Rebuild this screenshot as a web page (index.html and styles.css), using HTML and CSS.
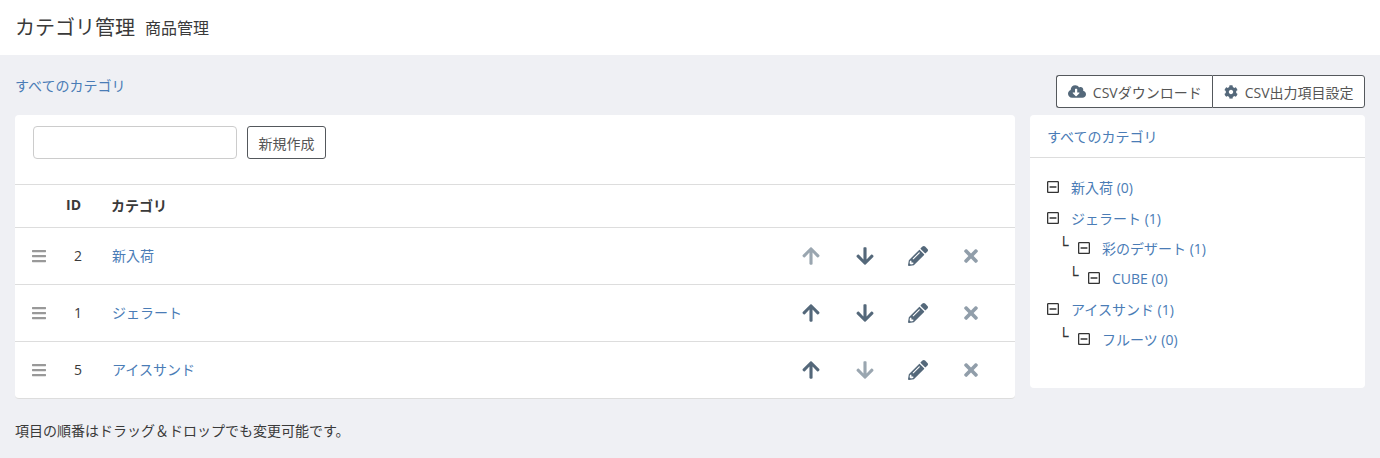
FILE: index.html
```html
<!DOCTYPE html>
<html lang="ja">
<head>
    <meta charset="UTF-8">
    <meta name="viewport" content="width=device-width, initial-scale=1.0">
    <title>カテゴリ管理</title>
    <link rel="stylesheet" href="styles.css">
</head>
<body>
    <svg class="sprite" xmlns="http://www.w3.org/2000/svg">
        <symbol id="i-up" viewBox="0 0 448 512"><path d="M34.9 289.5l-22.2-22.2c-9.4-9.4-9.4-24.6 0-33.9L207 39c9.4-9.4 24.6-9.4 33.9 0l194.3 194.3c9.4 9.4 9.4 24.6 0 33.9L413 289.4c-9.5 9.5-25 9.3-34.3-.4L264 168.6V456c0 13.3-10.7 24-24 24h-32c-13.3 0-24-10.7-24-24V168.6L69.2 289.1c-9.3 9.8-24.8 10-34.3.4z"/></symbol>
        <symbol id="i-down" viewBox="0 0 448 512"><path d="M413.1 222.5l22.2 22.2c9.4 9.4 9.4 24.6 0 33.9L241 473c-9.4 9.4-24.6 9.4-33.9 0L12.7 278.6c-9.4-9.4-9.4-24.6 0-33.9l22.2-22.2c9.5-9.5 25-9.3 34.3.4L184 343.4V56c0-13.3 10.7-24 24-24h32c13.3 0 24 10.7 24 24v287.4l114.8-120.5c9.3-9.8 24.8-10 34.3-.4z"/></symbol>
        <symbol id="i-pencil" viewBox="0 0 512 512"><path d="M497.9 142.1l-46.1 46.1c-4.7 4.7-12.3 4.7-17 0l-111-111c-4.7-4.7-4.7-12.3 0-17l46.1-46.1c18.7-18.7 49.1-18.7 67.9 0l60.1 60.1c18.8 18.7 18.8 49.1 0 67.9zM284.2 99.8L21.6 362.4.4 483.9c-2.9 16.4 11.4 30.6 27.8 27.8l121.5-21.3 262.6-262.6c4.7-4.7 4.7-12.3 0-17l-111-111c-4.8-4.7-12.4-4.7-17.1 0zM124.1 339.9c-5.5-5.5-5.5-14.3 0-19.8l154-154c5.5-5.5 14.3-5.5 19.8 0s5.5 14.3 0 19.8l-154 154c-5.5 5.5-14.3 5.5-19.8 0zM88 424h48v36.3l-64.5 11.3-31.1-31.1L51.7 376H88v48z"/></symbol>
        <symbol id="i-times" viewBox="0 0 352 512"><path d="M242.72 256l100.07-100.07c12.28-12.28 12.28-32.19 0-44.48l-22.24-22.24c-12.28-12.28-32.19-12.28-44.48 0L176 189.28 75.93 89.21c-12.28-12.28-32.19-12.28-44.48 0L9.21 111.45c-12.28 12.28-12.28 32.19 0 44.48L109.28 256 9.21 356.07c-12.28 12.28-12.28 32.19 0 44.48l22.24 22.24c12.28 12.28 32.2 12.28 44.48 0L176 322.72l100.07 100.07c12.28 12.28 32.2 12.28 44.48 0l22.24-22.24c12.28-12.28 12.28-32.19 0-44.48L242.72 256z"/></symbol>
        <symbol id="i-bars" viewBox="0 0 448 512"><path d="M16 132h416c8.837 0 16-7.163 16-16V76c0-8.837-7.163-16-16-16H16C7.163 60 0 67.163 0 76v40c0 8.837 7.163 16 16 16zm0 160h416c8.837 0 16-7.163 16-16v-40c0-8.837-7.163-16-16-16H16c-8.837 0-16 7.163-16 16v40c0 8.837 7.163 16 16 16zm0 160h416c8.837 0 16-7.163 16-16v-40c0-8.837-7.163-16-16-16H16c-8.837 0-16 7.163-16 16v40c0 8.837 7.163 16 16 16z"/></symbol>
        <symbol id="i-cloud" viewBox="0 0 640 512"><path d="M537.6 226.6c4.1-10.7 6.4-22.4 6.4-34.6 0-53-43-96-96-96-19.7 0-38.1 6-53.3 16.2C367 64.2 315.3 32 256 32c-88.4 0-160 71.6-160 160 0 2.7.1 5.4.2 8.1C40.2 219.8 0 273.2 0 336c0 79.5 64.5 144 144 144h368c70.7 0 128-57.3 128-128 0-61.9-44-113.6-102.4-125.4zm-132.9 88.7L299.3 420.7c-6.2 6.2-16.4 6.2-22.6 0L171.3 315.3c-10.1-10.1-2.9-27.3 11.3-27.3H248V176c0-8.8 7.2-16 16-16h48c8.8 0 16 7.2 16 16v112h65.4c14.2 0 21.4 17.2 11.3 27.3z"/></symbol>
        <symbol id="i-cog" viewBox="0 0 512 512"><path d="M487.4 315.7l-42.6-24.6c4.3-23.2 4.3-47 0-70.2l42.6-24.6c4.9-2.8 7.1-8.6 5.5-14-11.1-35.6-30-67.8-54.7-94.6-3.8-4.1-10-5.1-14.8-2.3L380.8 110c-17.9-15.4-38.5-27.3-60.8-35.1V25.8c0-5.6-3.9-10.5-9.4-11.7-36.7-8.2-74.3-7.8-109.2 0-5.5 1.2-9.4 6.1-9.4 11.7V75c-22.2 7.9-42.8 19.8-60.8 35.1L88.7 85.5c-4.9-2.8-11-1.9-14.8 2.3-24.7 26.7-43.6 58.9-54.7 94.6-1.7 5.4.6 11.2 5.5 14L67.3 221c-4.3 23.2-4.3 47 0 70.2l-42.6 24.6c-4.9 2.8-7.1 8.6-5.5 14 11.1 35.6 30 67.8 54.7 94.6 3.8 4.1 10 5.1 14.8 2.3l42.6-24.6c17.9 15.4 38.5 27.3 60.8 35.1v49.2c0 5.6 3.9 10.5 9.4 11.7 36.7 8.2 74.3 7.8 109.2 0 5.5-1.2 9.4-6.1 9.4-11.7v-49.2c22.2-7.9 42.8-19.8 60.8-35.1l42.6 24.6c4.9 2.8 11 1.9 14.8-2.3 24.7-26.7 43.6-58.9 54.7-94.6 1.5-5.5-.7-11.3-5.6-14.1zM256 336c-44.1 0-80-35.9-80-80s35.9-80 80-80 80 35.9 80 80-35.9 80-80 80z"/></symbol>
        <symbol id="i-minus" viewBox="0 0 448 512"><path d="M108 284c-6.6 0-12-5.4-12-12v-32c0-6.6 5.4-12 12-12h232c6.6 0 12 5.4 12 12v32c0 6.6-5.4 12-12 12H108zM448 80v352c0 26.5-21.5 48-48 48H48c-26.5 0-48-21.5-48-48V80c0-26.5 21.5-48 48-48h352c26.5 0 48 21.5 48 48zm-48 346V86c0-3.3-2.7-6-6-6H54c-3.3 0-6 2.7-6 6v340c0 3.3 2.7 6 6 6h340c3.3 0 6-2.7 6-6z"/></symbol>
    </svg>

    <div class="page-header">
        <h1 class="page-title">カテゴリ管理</h1>
        <span class="page-sub">商品管理</span>
    </div>

    <div class="content">
        <div class="main-col">
            <div class="crumb"><a href="#">すべてのカテゴリ</a></div>
            <div class="card list-card">
                <div class="new-form">
                    <input class="name-input" type="text">
                    <button class="btn" type="button">新規作成</button>
                </div>
                <div class="list-head">
                    <span class="col-handle"></span>
                    <span class="col-id">ID</span>
                    <span class="col-name">カテゴリ</span>
                </div>
                <div class="list-row">
                    <span class="col-handle"><svg class="icon handle"><use href="#i-bars"/></svg></span>
                    <span class="col-id">2</span>
                    <span class="col-name"><a href="#">新入荷</a></span>
                    <span class="actions">
                        <svg class="icon action off"><use href="#i-up"/></svg>
                        <svg class="icon action"><use href="#i-down"/></svg>
                        <svg class="icon action pencil"><use href="#i-pencil"/></svg>
                        <svg class="icon action del"><use href="#i-times"/></svg>
                    </span>
                </div>
                <div class="list-row">
                    <span class="col-handle"><svg class="icon handle"><use href="#i-bars"/></svg></span>
                    <span class="col-id">1</span>
                    <span class="col-name"><a href="#">ジェラート</a></span>
                    <span class="actions">
                        <svg class="icon action"><use href="#i-up"/></svg>
                        <svg class="icon action"><use href="#i-down"/></svg>
                        <svg class="icon action pencil"><use href="#i-pencil"/></svg>
                        <svg class="icon action del"><use href="#i-times"/></svg>
                    </span>
                </div>
                <div class="list-row">
                    <span class="col-handle"><svg class="icon handle"><use href="#i-bars"/></svg></span>
                    <span class="col-id">5</span>
                    <span class="col-name"><a href="#">アイスサンド</a></span>
                    <span class="actions">
                        <svg class="icon action"><use href="#i-up"/></svg>
                        <svg class="icon action off"><use href="#i-down"/></svg>
                        <svg class="icon action pencil"><use href="#i-pencil"/></svg>
                        <svg class="icon action del"><use href="#i-times"/></svg>
                    </span>
                </div>
            </div>
            <p class="note">項目の順番はドラッグ＆ドロップでも変更可能です。</p>
        </div>

        <div class="side-col">
            <div class="btn-group">
                <button class="btn" type="button"><svg class="icon cloud"><use href="#i-cloud"/></svg>CSVダウンロード</button>
                <button class="btn" type="button"><svg class="icon cog"><use href="#i-cog"/></svg>CSV出力項目設定</button>
            </div>
            <div class="card tree-card">
                <div class="tree-head"><a href="#">すべてのカテゴリ</a></div>
                <ul class="tree">
                    <li class="tree-item"><svg class="icon minus"><use href="#i-minus"/></svg><a href="#">新入荷 (0)</a></li>
                    <li class="tree-item"><svg class="icon minus"><use href="#i-minus"/></svg><a href="#">ジェラート (1)</a></li>
                    <li class="tree-item level-2"><span class="branch">└</span><svg class="icon minus"><use href="#i-minus"/></svg><a href="#">彩のデザート (1)</a></li>
                    <li class="tree-item level-3"><span class="branch">└</span><svg class="icon minus"><use href="#i-minus"/></svg><a href="#">CUBE (0)</a></li>
                    <li class="tree-item"><svg class="icon minus"><use href="#i-minus"/></svg><a href="#">アイスサンド (1)</a></li>
                    <li class="tree-item level-2"><span class="branch">└</span><svg class="icon minus"><use href="#i-minus"/></svg><a href="#">フルーツ (0)</a></li>
                </ul>
            </div>
        </div>
    </div>
</body>
</html>
```

FILE: styles.css
```css
* {
    margin: 0;
    padding: 0;
    box-sizing: border-box;
}

body {
    font-family: "Open Sans", "Noto Sans CJK JP", sans-serif;
    font-size: 14px;
    color: #3a3a3a;
    background: #eff0f4;
    height: 458px;
    overflow: hidden;
}

a {
    color: #4a7cb6;
    text-decoration: none;
}

.sprite {
    display: none;
}

.icon {
    display: block;
    fill: #54687a;
    flex: none;
}

.page-header {
    height: 55px;
    background: #fff;
    padding: 0 15px;
    display: flex;
    align-items: center;
    gap: 10px;
}

.page-title {
    font-size: 20px;
    font-weight: 400;
    line-height: 28px;
}

.page-sub {
    font-size: 16px;
    line-height: 28px;
}

.content {
    display: flex;
    gap: 15px;
    padding: 20px 15px 0;
}

.main-col {
    width: 1000px;
}

.side-col {
    width: 335px;
}

.crumb {
    height: 40px;
    line-height: 21px;
}

.card {
    background: #fff;
    border-radius: 4px;
}

.list-card {
    border-bottom: 1px solid #ddd;
}

.new-form {
    height: 70px;
    padding: 11px 18px 0;
    display: flex;
    gap: 10px;
    align-items: flex-start;
    border-bottom: 1px solid #ddd;
}

.name-input {
    width: 204px;
    height: 33px;
    border: 1px solid #ccc;
    border-radius: 4px;
    background: #fff;
}

.btn {
    height: 33px;
    padding: 0 10.5px;
    background: #fff;
    border: 1px solid #54585c;
    border-radius: 3px;
    font-family: inherit;
    font-size: 14px;
    color: #555;
    display: flex;
    align-items: center;
    white-space: nowrap;
}

.list-head,
.list-row {
    display: flex;
    align-items: center;
    border-bottom: 1px solid #ddd;
}

.list-head {
    height: 43px;
    font-weight: 700;
}

.list-row {
    height: 57px;
}

.list-row:last-child {
    border-bottom: none;
    height: 56px;
}

.col-handle {
    width: 47px;
    padding-left: 17px;
}

.col-id {
    width: 50px;
    padding-bottom: 2px;
    white-space: nowrap;
}

.list-head .col-id {
    padding-left: 4px;
    padding-bottom: 3px;
}

.list-row .col-id {
    padding-left: 12px;
}

.col-name {
    flex: 1;
    padding-bottom: 2px;
}

.list-head .col-name {
    padding-bottom: 3px;
    margin-left: -1px;
}

.handle {
    width: 14px;
    height: 16px;
    fill: #999;
}

.actions {
    display: grid;
    grid-template-columns: repeat(4, 53.33px);
    justify-items: center;
    align-items: center;
    padding-right: 17px;
}

.action {
    width: 18px;
    height: 20px;
}

.pencil {
    width: 20px;
    height: 20px;
}

.off {
    fill: #9aa6b0;
}

.del {
    fill: #919eaa;
}

.note {
    margin-top: 21px;
    line-height: 21px;
}

.btn-group {
    display: flex;
    justify-content: flex-end;
    margin-bottom: 7px;
}

.btn-group .btn:first-child {
    border-radius: 3px 0 0 3px;
    border-right: none;
}

.btn-group .btn:last-child {
    border-radius: 0 3px 3px 0;
}

.cloud {
    width: 18px;
    height: 15px;
    margin-right: 7px;
}

.cog {
    width: 14px;
    height: 14px;
    margin-right: 7px;
}

.tree-card {
    height: 273px;
}

.tree-head {
    height: 43px;
    line-height: 43px;
    padding-left: 17px;
    border-bottom: 1px solid #ddd;
}

.tree {
    list-style: none;
    padding: 14px 17px 0;
}

.tree-item {
    display: flex;
    align-items: center;
    height: 30.4px;
}

.minus {
    width: 12px;
    height: 14px;
    fill: #333;
    margin-right: 12px;
}

.level-2 {
    padding-left: 14px;
}

.level-3 {
    padding-left: 24px;
}

/* the glyph only draws its upper half, so it sits high in the row */
.branch {
    width: 17px;
    font-family: "DejaVu Sans", sans-serif;
    font-size: 16px;
    line-height: 16px;
    color: #333;
    position: relative;
    top: -2px;
    left: -2px;
}
```
